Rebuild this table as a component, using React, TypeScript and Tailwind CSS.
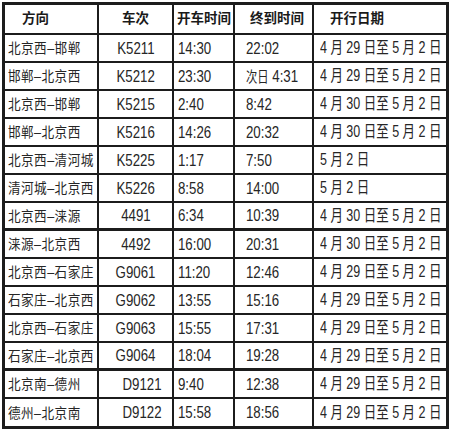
import React from 'react';

type Row = {
  route: string;
  train: string;
  dep: string;
  arr: string;
  dates: string;
  thick?: boolean;
};

const rows: Row[] = [
  { route: '北京西–邯郸', train: 'K5211', dep: '14:30', arr: '22:02', dates: '4 月 29 日至 5 月 2 日' },
  { route: '邯郸–北京西', train: 'K5212', dep: '23:30', arr: '次日 4:31', dates: '4 月 29 日至 5 月 2 日' },
  { route: '北京西–邯郸', train: 'K5215', dep: '2:40', arr: '8:42', dates: '4 月 30 日至 5 月 2 日' },
  { route: '邯郸–北京西', train: 'K5216', dep: '14:26', arr: '20:32', dates: '4 月 30 日至 5 月 2 日' },
  { route: '北京西–清河城', train: 'K5225', dep: '1:17', arr: '7:50', dates: '5 月 2 日' },
  { route: '清河城–北京西', train: 'K5226', dep: '8:58', arr: '14:00', dates: '5 月 2 日' },
  { route: '北京西–涞源', train: '4491', dep: '6:34', arr: '10:39', dates: '4 月 30 日至 5 月 2 日', thick: true },
  { route: '涞源–北京西', train: '4492', dep: '16:00', arr: '20:31', dates: '4 月 30 日至 5 月 2 日' },
  { route: '北京西–石家庄', train: 'G9061', dep: '11:20', arr: '12:46', dates: '4 月 29 日至 5 月 2 日' },
  { route: '石家庄–北京西', train: 'G9062', dep: '13:55', arr: '15:16', dates: '4 月 29 日至 5 月 2 日' },
  { route: '北京西–石家庄', train: 'G9063', dep: '15:55', arr: '17:31', dates: '4 月 29 日至 5 月 2 日' },
  { route: '石家庄–北京西', train: 'G9064', dep: '18:04', arr: '19:28', dates: '4 月 29 日至 5 月 2 日', thick: true },
  { route: '北京南–德州', train: 'D9121', dep: '9:40', arr: '12:38', dates: '4 月 29 日至 5 月 2 日' },
  { route: '德州–北京南', train: 'D9122', dep: '15:58', arr: '18:56', dates: '4 月 29 日至 5 月 2 日' },
];

const font = { fontFamily: '"Liberation Sans", "Noto Sans CJK SC", sans-serif' };

// condensed number text, like the narrow Helvetica in the print
const Narrow = ({ children, center }: { children: React.ReactNode; center?: boolean }) => (
  <span
    className={`inline-block whitespace-nowrap text-[17px] leading-none scale-x-[0.78] ${center ? 'origin-center' : 'origin-left'}`}
  >
    {children}
  </span>
);

export default function App() {
  return (
    <div className="w-[455px] h-[433px] bg-white pt-[2px] pl-[2px]" style={font}>
      <div className="w-[447px] border-[3px] border-[#1c1c1c] text-[#262626]">
        <div className="grid grid-cols-[94px_75px_61px_79px_1fr] h-[30px] border-b-2 border-[#1c1c1c] text-[13.5px] font-bold text-[#1a1a1a]">
          <div className="flex items-center pl-[17px] border-r-2 border-[#1c1c1c]">方向</div>
          <div className="flex items-center justify-center border-r-2 border-[#1c1c1c]">车次</div>
          <div className="flex items-center pl-[3px] border-r-2 border-[#1c1c1c] whitespace-nowrap">开车时间</div>
          <div className="flex items-center pl-[15px] border-r-2 border-[#1c1c1c] whitespace-nowrap">终到时间</div>
          <div className="flex items-center pl-[16px]">开行日期</div>
        </div>
        {rows.map((r, i) => {
          const last = i === rows.length - 1;
          const bb = last ? '' : r.thick ? 'border-b-[3px]' : 'border-b-2';
          return (
            <div
              key={i}
              className={`grid grid-cols-[94px_75px_61px_79px_1fr] ${last ? 'h-[27px]' : 'h-[28px]'} ${bb} border-[#1c1c1c]`}
            >
              <div className="flex items-center pl-[3px] border-r-2 border-[#1c1c1c] overflow-visible">
                <span className="inline-block whitespace-nowrap text-[14px] leading-none tracking-[0.5px] scale-x-[0.9] origin-left">
                  {r.route}
                </span>
              </div>
              <div
                className={`flex items-center justify-center border-r-2 border-[#1c1c1c] ${r.train.startsWith('D') ? 'pl-[14px]' : ''}`}
              >
                <Narrow center>{r.train}</Narrow>
              </div>
              <div className="flex items-center pl-[4px] border-r-2 border-[#1c1c1c]">
                <Narrow>{r.dep}</Narrow>
              </div>
              <div className="flex items-center pl-[11px] border-r-2 border-[#1c1c1c]">
                {r.arr.startsWith('次日') ? (
                  <Narrow>
                    <span className="text-[14.5px]">次日</span> {r.arr.slice(3)}
                  </Narrow>
                ) : (
                  <Narrow>{r.arr}</Narrow>
                )}
              </div>
              <div className="flex items-center pl-[6px]">
                <span className="inline-block whitespace-nowrap text-[16px] leading-none scale-x-[0.78] origin-left">
                  {r.dates}
                </span>
              </div>
            </div>
          );
        })}
      </div>
    </div>
  );
}
